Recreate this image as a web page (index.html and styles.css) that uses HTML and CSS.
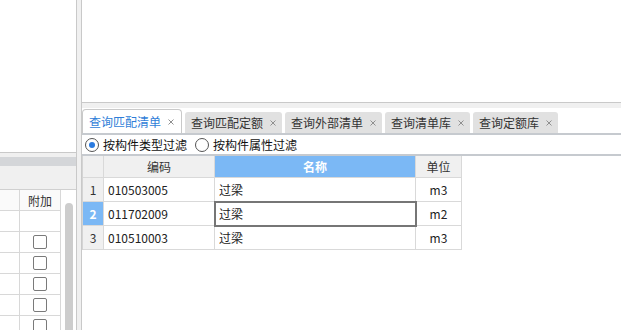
FILE: index.html
```html
<!DOCTYPE html>
<html lang="zh-CN">
<head>
    <meta charset="UTF-8">
    <title>查询匹配清单</title>
    <link rel="stylesheet" href="styles.css">
</head>
<body>
    <div class="app">
        <div class="left">
            <div class="left-top"></div>
            <div class="left-gap"></div>
            <div class="left-bar"></div>
            <div class="left-tools"></div>
            <div class="left-grid">
                <div class="lg-table">
                    <div class="lg-row lg-head"><div class="lg-c1"></div><div class="lg-c2">附加</div></div>
                    <div class="lg-row"><div class="lg-c1"></div><div class="lg-c2"></div></div>
                    <div class="lg-row"><div class="lg-c1"></div><div class="lg-c2"><span class="chk"></span></div></div>
                    <div class="lg-row"><div class="lg-c1"></div><div class="lg-c2"><span class="chk"></span></div></div>
                    <div class="lg-row"><div class="lg-c1"></div><div class="lg-c2"><span class="chk"></span></div></div>
                    <div class="lg-row"><div class="lg-c1"></div><div class="lg-c2"><span class="chk"></span></div></div>
                    <div class="lg-row"><div class="lg-c1"></div><div class="lg-c2"><span class="chk"></span></div></div>
                </div>
                <div class="lg-scroll"><div class="lg-thumb"></div></div>
            </div>
        </div>

        <div class="splitter"></div>

        <div class="right">
            <div class="right-top"></div>
            <div class="right-gap"></div>

            <div class="tabs">
                <div class="tab active"><span class="tab-label">查询匹配清单</span><svg class="tab-x" width="8" height="8" viewBox="0 0 8 8"><path d="M1.5 1.5L6.5 6.5M6.5 1.5L1.5 6.5"/></svg></div>
                <div class="tab"><span class="tab-label">查询匹配定额</span><svg class="tab-x" width="8" height="8" viewBox="0 0 8 8"><path d="M1.5 1.5L6.5 6.5M6.5 1.5L1.5 6.5"/></svg></div>
                <div class="tab"><span class="tab-label">查询外部清单</span><svg class="tab-x" width="8" height="8" viewBox="0 0 8 8"><path d="M1.5 1.5L6.5 6.5M6.5 1.5L1.5 6.5"/></svg></div>
                <div class="tab"><span class="tab-label">查询清单库</span><svg class="tab-x" width="8" height="8" viewBox="0 0 8 8"><path d="M1.5 1.5L6.5 6.5M6.5 1.5L1.5 6.5"/></svg></div>
                <div class="tab"><span class="tab-label">查询定额库</span><svg class="tab-x" width="8" height="8" viewBox="0 0 8 8"><path d="M1.5 1.5L6.5 6.5M6.5 1.5L1.5 6.5"/></svg></div>
            </div>

            <div class="filters">
                <label class="radio"><span class="radio-dot on"></span>按构件类型过滤</label>
                <label class="radio"><span class="radio-dot"></span>按构件属性过滤</label>
            </div>

            <div class="grid-wrap">
                <table class="grid">
                    <thead>
                        <tr>
                            <th class="c-num"></th>
                            <th class="c-code">编码</th>
                            <th class="c-name sel-head">名称</th>
                            <th class="c-unit">单位</th>
                        </tr>
                    </thead>
                    <tbody>
                        <tr>
                            <td class="c-num">1</td>
                            <td class="c-code">010503005</td>
                            <td class="c-name">过梁</td>
                            <td class="c-unit">m3</td>
                        </tr>
                        <tr>
                            <td class="c-num sel-num">2</td>
                            <td class="c-code">011702009</td>
                            <td class="c-name focus">过梁</td>
                            <td class="c-unit">m2</td>
                        </tr>
                        <tr>
                            <td class="c-num">3</td>
                            <td class="c-code">010510003</td>
                            <td class="c-name">过梁</td>
                            <td class="c-unit">m3</td>
                        </tr>
                    </tbody>
                </table>
            </div>
        </div>
    </div>
</body>
</html>
```

FILE: styles.css
```css
body {
    margin: 0;
    background-color: #f0f0f0;
    font-family: "Noto Sans CJK SC", "Microsoft YaHei", sans-serif;
    font-size: 12px;
    color: #222;
    overflow: hidden;
}

.app {
    display: flex;
    width: 621px;
    height: 330px;
}

/* left pane */
.left {
    flex: none;
    width: 76px;
    display: flex;
    flex-direction: column;
    border-right: 1px solid #c9c9c9;
}

.left-top {
    flex: none;
    height: 152px;
    background: #fff;
    border-bottom: 1px solid #c9c9c9;
}

.left-gap {
    flex: none;
    height: 4px;
}

.left-bar {
    flex: none;
    height: 9px;
    background: #d4d6d9;
}

.left-tools {
    flex: none;
    height: 23px;
}

.left-grid {
    flex: 1;
    display: flex;
    background: #fff;
    border-top: 1px solid #d0d0d0;
}

.lg-table {
    width: 61px;
}

.lg-row {
    display: flex;
    height: 20px;
    border-bottom: 1px solid #d8d8d8;
}

.lg-head {
    background: #fafafa;
}

.lg-c1 {
    width: 19px;
    border-right: 1px solid #d8d8d8;
}

.lg-c2 {
    width: 40px;
    border-right: 1px solid #d8d8d8;
    display: flex;
    align-items: center;
    justify-content: center;
    color: #333;
}

.chk {
    width: 12px;
    height: 12px;
    border: 1px solid #7a7a7a;
    border-radius: 2px;
    background: #fff;
}

.lg-scroll {
    flex: 1;
    padding-top: 13px;
}

.lg-thumb {
    width: 8px;
    height: 140px;
    margin-left: 4px;
    background: #cdcdcd;
    border-radius: 4px;
}

.splitter {
    flex: none;
    width: 4px;
}

/* right pane */
.right {
    flex: 1;
    display: flex;
    flex-direction: column;
    background: #fff;
    border-left: 1px solid #c9c9c9;
}

.right-top {
    flex: none;
    height: 102px;
    border-bottom: 1px solid #c9c9c9;
}

.right-gap {
    flex: none;
    height: 5px;
    background: #f0f0f0;
}

.tabs {
    flex: none;
    height: 25px;
    display: flex;
    align-items: flex-end;
    gap: 3px;
    border-bottom: 2px solid #c6cacf;
}

.tab {
    display: flex;
    align-items: center;
    height: 21px;
    padding: 0 5px 0 6px;
    background: #e1e1e1;
    border-radius: 3px 3px 0 0;
    color: #333;
    white-space: nowrap;
}

.tab.active {
    height: 23px;
    padding-right: 6px;
    background: #fff;
    border: 1px solid #c9c9c9;
    border-bottom: none;
    border-radius: 4px 4px 0 0;
    color: #2f7ed8;
}

.tab-label {
    margin-right: 6px;
}

.tab-x path {
    stroke: #8f8f8f;
    stroke-width: 1;
    fill: none;
}

.filters {
    flex: none;
    height: 19px;
    display: flex;
    align-items: center;
    padding-left: 3px;
    border-bottom: 2px solid #c6cacf;
    color: #111;
}

.radio {
    display: flex;
    align-items: center;
    gap: 4px;
    margin-right: 8px;
}

.radio-dot {
    width: 12px;
    height: 12px;
    border: 1px solid #555;
    border-radius: 50%;
    background: #fff;
    display: flex;
    align-items: center;
    justify-content: center;
}

.radio-dot.on::after {
    content: "";
    width: 6px;
    height: 6px;
    border-radius: 50%;
    background: #2a7be0;
}

/* result grid */
.grid-wrap {
    flex: 1;
}

.grid {
    border-collapse: separate;
    border-spacing: 0;
    table-layout: fixed;
    border-left: 1px solid #d4d4d4;
}

.grid th,
.grid td {
    box-sizing: border-box;
    padding: 0 4px;
    border-right: 1px solid #d9d9d9;
    border-bottom: 1px solid #d9d9d9;
    line-height: 16px;
    white-space: nowrap;
}

.grid thead tr {
    height: 22px;
}

.grid tbody tr {
    height: 24px;
}

.grid th {
    font-weight: normal;
    background: #f0f0f0;
    color: #333;
}

.grid th.sel-head {
    background: #7bb8f5;
    color: #fff;
    font-weight: bold;
}

.c-num {
    width: 21px;
    text-align: center;
    background: #f0f0f0;
    color: #333;
}

.grid td.c-num {
    padding: 0;
}

.grid td.sel-num {
    background: #7bb8f5;
    color: #fff;
    font-weight: bold;
}

.c-code {
    width: 111px;
}

.c-name {
    width: 201px;
}

.c-unit {
    width: 46px;
    text-align: center;
}

.grid td.focus {
    outline: 2px solid #767676;
    outline-offset: -1px;
}
```
